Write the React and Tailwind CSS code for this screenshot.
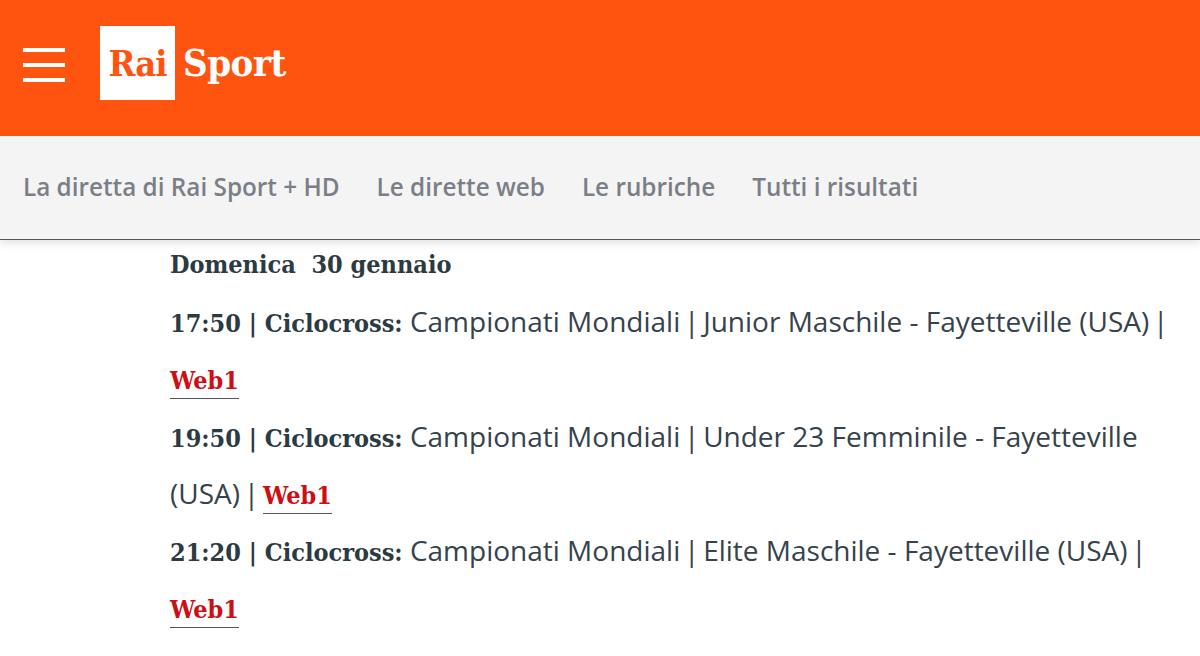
import React from 'react';

const navItems = ['La diretta di Rai Sport + HD', 'Le dirette web', 'Le rubriche', 'Tutti i risultati'];

const schedule = [
  { time: '17:50', event: 'Junior Maschile - Fayetteville (USA)' },
  { time: '19:50', event: 'Under 23 Femminile - Fayetteville (USA)' },
  { time: '21:20', event: 'Elite Maschile - Fayetteville (USA)' },
];

export default function App() {
  return (
    <div className="w-[1200px] h-[656px] overflow-hidden bg-white font-['Open_Sans',sans-serif]">
      <header className="h-[136px] bg-[#ff5410] flex items-start pl-[23px]">
        {/* Hamburger */}
        <div className="w-[42px] mt-[48px] flex flex-col gap-[11px]">
          <span className="h-1 bg-white block" />
          <span className="h-1 bg-white block" />
          <span className="h-1 bg-white block" />
        </div>
        {/* Logo */}
        <div className="ml-[35px] mt-[26px] flex items-center font-['DejaVu_Serif_Condensed','DejaVu_Serif',serif] font-bold">
          <div className="w-[75px] h-[74px] bg-white flex items-center justify-center">
            <span className="text-[#ff5410] text-[36px] leading-none tracking-[-1px]">Rai</span>
          </div>
          <span className="ml-[8px] text-white text-[38px] leading-none tracking-[-0.5px]">Sport</span>
        </div>
      </header>
      <nav className="h-[104px] bg-[#f4f4f5] border-b border-[#55555f] shadow-[0_3px_8px_rgba(0,0,0,0.12)] flex items-center gap-[37px] pl-[23px] text-[24.3px] font-semibold text-[#7a7f87]">
        {navItems.map((item) => (
          <span key={item}>{item}</span>
        ))}
      </nav>
      <main className="pl-[170px] -mt-[4px] text-[28px] leading-[57.2px] text-[#36424c]">
        <p className="font-bold font-['DejaVu_Serif_Condensed','DejaVu_Serif',serif] text-[25px] text-[#2c3a42]">Domenica&nbsp; 30 gennaio</p>
        {schedule.map((row) => (
          <p key={row.time}>
            <b className="font-['DejaVu_Serif_Condensed','DejaVu_Serif',serif] text-[25px] leading-none text-[#2c3a42]">{row.time} | Ciclocross:</b>{' '}
            Campionati Mondiali<span className="[word-spacing:-3.5px]"> | </span>{row.event}<span className="[word-spacing:-3.5px]"> | </span>
            <a className="text-[#cc0f14] font-bold font-['DejaVu_Serif_Condensed','DejaVu_Serif',serif] text-[25px] leading-none border-b border-[#555] pb-[3px]">Web1</a>
          </p>
        ))}
      </main>
    </div>
  );
}
